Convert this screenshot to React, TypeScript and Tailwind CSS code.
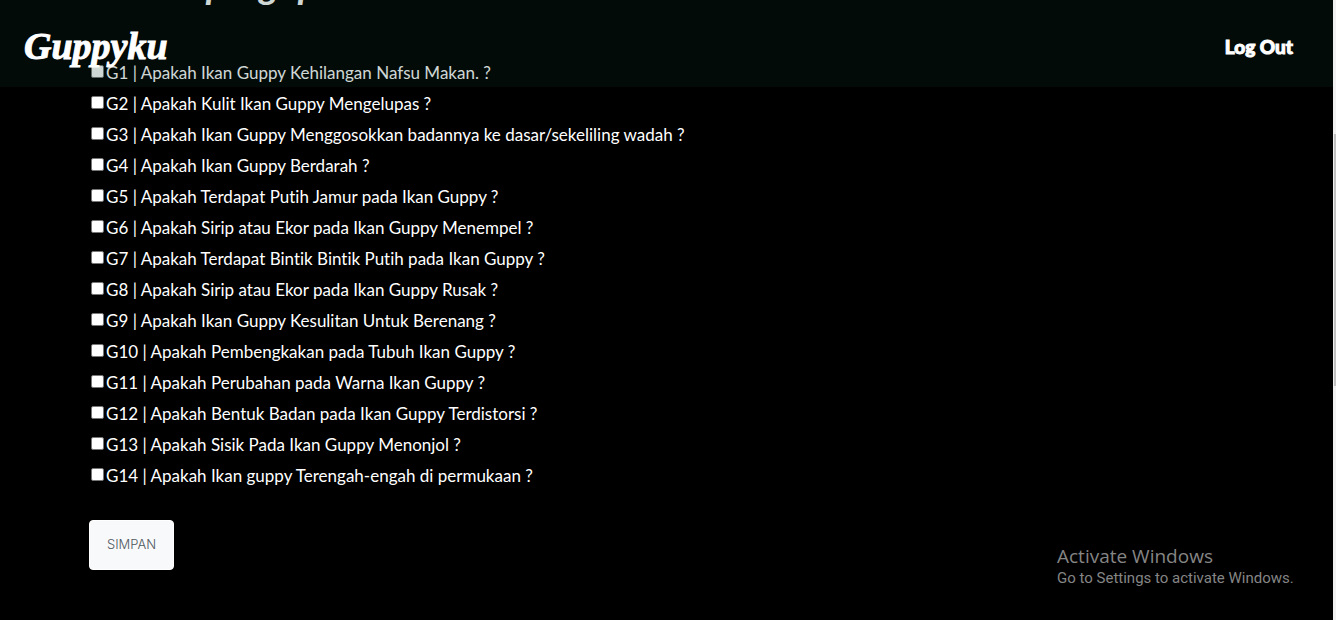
import React from "react";

const questions: string[] = [
  "Apakah Ikan Guppy Kehilangan Nafsu Makan. ?",
  "Apakah Kulit Ikan Guppy Mengelupas ?",
  "Apakah Ikan Guppy Menggosokkan badannya ke dasar/sekeliling wadah ?",
  "Apakah Ikan Guppy Berdarah ?",
  "Apakah Terdapat Putih Jamur pada Ikan Guppy ?",
  "Apakah Sirip atau Ekor pada Ikan Guppy Menempel ?",
  "Apakah Terdapat Bintik Bintik Putih pada Ikan Guppy ?",
  "Apakah Sirip atau Ekor pada Ikan Guppy Rusak ?",
  "Apakah Ikan Guppy Kesulitan Untuk Berenang ?",
  "Apakah Pembengkakan pada Tubuh Ikan Guppy ?",
  "Apakah Perubahan pada Warna Ikan Guppy ?",
  "Apakah Bentuk Badan pada Ikan Guppy Terdistorsi ?",
  "Apakah Sisik Pada Ikan Guppy Menonjol ?",
  "Apakah Ikan guppy Terengah-engah di permukaan ?",
];

function Header() {
  return (
    <header className="absolute inset-x-0 top-0 z-10 flex h-[87px] items-center justify-between bg-[#0f372d]/20 pr-10 pl-6 text-white">
      <a href="#" className="pt-1 font-['Liberation_Serif',serif] text-[38px] leading-none font-bold italic [-webkit-text-stroke:1px_white]">
        Guppyku
      </a>
      <a href="#" className="pt-2 font-['Lato',sans-serif] text-[19px] font-black [-webkit-text-stroke:1px_white]">
        Log Out
      </a>
    </header>
  );
}

function Question({ index, text }: { index: number; text: string }) {
  const id = `g${index}`;
  return (
    <li className="flex h-[31px] items-center">
      <input
        id={id}
        type="checkbox"
        className="mr-0.5 mb-0.5 ml-0.5 size-[13px] appearance-none rounded-[2px] border border-[#767676] bg-white checked:bg-blue-600"
      />
      <label htmlFor={id}>
        G{index} | {text}
      </label>
    </li>
  );
}

function ActivationNotice() {
  return (
    <aside className="absolute right-10 bottom-8 w-[236px] whitespace-nowrap text-[#858585]">
      <p className="font-['Open_Sans',sans-serif] text-[19px] leading-6">Activate Windows</p>
      <p className="font-['Roboto',sans-serif] text-[15px] leading-5">Go to Settings to activate Windows.</p>
    </aside>
  );
}

function ScrollTrack() {
  return (
    <div className="flex w-[3px] shrink-0 flex-col bg-[#f1f1f1]" aria-hidden="true">
      <div className="mt-[134px] ml-px h-[252px] bg-[#c1c1c1]" />
    </div>
  );
}

export default function App() {
  return (
    <div className="flex min-h-screen bg-black text-white">
      <div className="relative grow overflow-hidden font-['Lato',sans-serif] [font-variant-ligatures:none]">
        <Header />
        <main className="px-[89px]">
          <h1 className="-mt-9 h-9 pl-12 text-[38px] leading-10 font-bold italic">Tetap sigap</h1>
          <form onSubmit={(e) => e.preventDefault()}>
            <ul className="pt-[57px] text-[17px]">
              {questions.map((q, i) => (
                <Question key={q} index={i + 1} text={q} />
              ))}
            </ul>
            <button
              type="submit"
              className="mt-[29px] h-[50px] rounded border border-white bg-[#f8f9fa] px-[17px] font-['Inter',sans-serif] text-[13px] font-light text-[#4f575e]"
            >
              SIMPAN
            </button>
          </form>
        </main>
        <ActivationNotice />
      </div>
      <ScrollTrack />
    </div>
  );
}
